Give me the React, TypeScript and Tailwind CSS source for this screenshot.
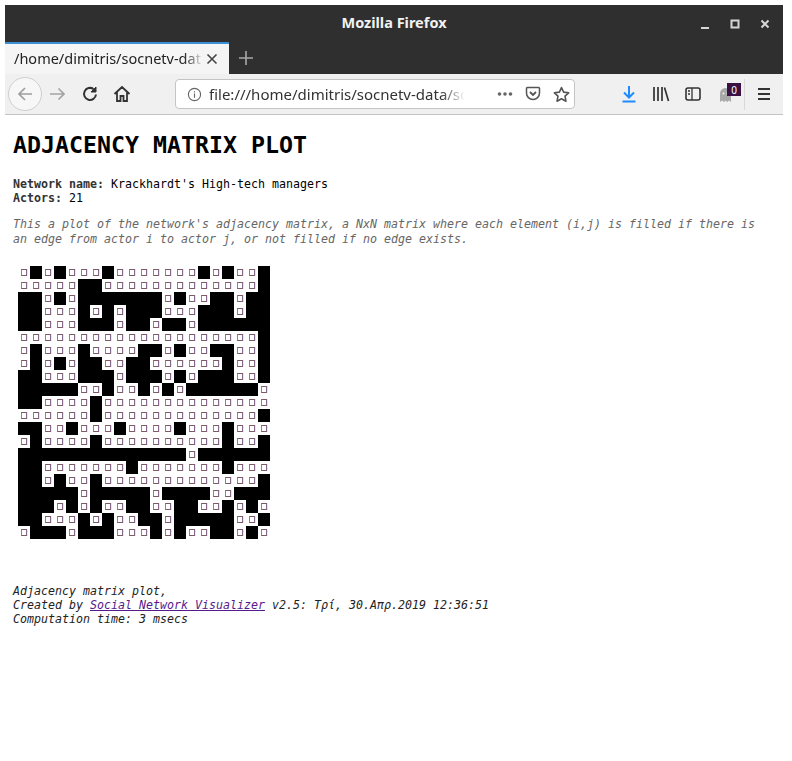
const M = [
  "010100010000000101001",
  "000001100000000000001",
  "110101111111010011011",
  "110001010111000111011",
  "110001110110110111111",
  "000000000000000000001",
  "010001000011010011001",
  "010101100110000001001",
  "110001110111010111001",
  "111110010010101111110",
  "110000100000000000000",
  "000000100000000000001",
  "110010001000010001000",
  "010000100000000001001",
  "111111111111110111111",
  "110000000100000001000",
  "110100100000000000001",
  "111110111110111100111",
  "111010100110011001010",
  "110001010011011111001",
  "011101110001010011010",
];

const mono = { fontFamily: '"DejaVu Sans Mono", monospace' };

function Win() {
  return (
    <div className="flex items-center gap-[18px] pr-[12px]">
      <svg width="12" height="12" viewBox="0 0 12 12"><rect x="2" y="9" width="8" height="2" fill="#d6d6d6" /></svg>
      <svg width="12" height="12" viewBox="0 0 12 12"><rect x="2.500" y="2.500" width="7" height="7" fill="none" stroke="#d6d6d6" strokeWidth="2" /></svg>
      <svg width="12" height="12" viewBox="0 0 12 12"><path d="M2.500 2.500l7 7M9.500 2.500l-7 7" stroke="#d6d6d6" strokeWidth="2" /></svg>
    </div>
  );
}

export default function App() {
  return (
    <div className="min-h-[761px] bg-white pt-[5px]" style={mono}>
      <div className="mx-[5px] mr-[9px]" style={{ fontFamily: '"Noto Sans", sans-serif' }}>
        <div className="relative flex h-[37px] items-center justify-end bg-[#2f2f2f]">
          <span className="absolute left-0 right-0 top-[7px] text-center text-[14.5px] font-bold leading-[20px] text-[#f2f2f2]">Mozilla Firefox</span>
          <Win />
        </div>
        <div className="flex h-[32px] items-stretch bg-[#2f2f2f]">
          <div className="flex w-[224px] items-center border-t-2 border-[#3d8fd6] bg-[#f5f5f5] pl-[9px]">
            <span className="w-[190px] whitespace-nowrap text-[14.5px] text-[#222]" style={{ maskImage: "linear-gradient(to right, #000 170px, transparent 190px)" }}>/home/dimitris/socnetv-dat</span>
            <svg className="ml-[2px] shrink-0" width="12" height="12" viewBox="0 0 12 12"><path d="M1.500 1.500l9 9M10.500 1.500l-9 9" stroke="#444" strokeWidth="1.600" /></svg>
          </div>
          <div className="flex w-[34px] items-center justify-center">
            <svg width="16" height="16" viewBox="0 0 16 16"><path d="M8 1v14M1 8h14" stroke="#a8a8a8" strokeWidth="1.600" /></svg>
          </div>
        </div>
        <div className="flex h-[41px] items-center border-b border-[#c4c4c4] bg-[#f0f0f0]">
          <div className="ml-[3px] flex h-[34px] w-[34px] items-center justify-center rounded-full border border-[#cfcfcf] bg-[#f7f7f7]">
            <svg width="18" height="18" viewBox="0 0 18 18" fill="none" stroke="#9e9e9e" strokeWidth="1.700"><path d="M16 9H3M9 3L3 9l6 6" /></svg>
          </div>
          <svg className="ml-[7px]" width="18" height="18" viewBox="0 0 18 18" fill="none" stroke="#a3a3a3" strokeWidth="1.700"><path d="M1 9h14M9.500 3.500L15 9l-5.500 5.500" /></svg>
          <svg className="ml-[14px]" width="18" height="18" viewBox="0 0 18 18" fill="none" stroke="#333" strokeWidth="2"><path d="M15 9.500A6 6 0 1 1 12.500 4" /><path d="M15 2v5h-5z" fill="#333" strokeWidth="1" /></svg>
          <svg className="ml-[14px]" width="18" height="18" viewBox="0 0 18 18" fill="none" stroke="#333" strokeWidth="1.800"><path d="M1.500 9L9 2l7.500 7M4 7.500V16h3.500v-5h3v5H14V7.500" /></svg>
          <div className="ml-[44px] flex h-[30px] w-[400px] shrink-0 items-center rounded-[4px] border border-[#c4c4c4] bg-white">
            <svg className="ml-[11px] shrink-0" width="15" height="15" viewBox="0 0 16 16" fill="none" stroke="#666" strokeWidth="1.200"><circle cx="8" cy="8" r="6.500" /><path d="M8 7v4.500M8 4.500v1.300" /></svg>
            <span className="ml-[7px] w-[256px] whitespace-nowrap text-[15px] text-[#333]" style={{ maskImage: "linear-gradient(to right, #000 232px, transparent 256px)" }}>file:///home/dimitris/socnetv-data/sc</span>
            <svg className="ml-[32px] shrink-0" width="16" height="16" viewBox="0 0 16 16" fill="#666"><circle cx="2.500" cy="8" r="1.800" /><circle cx="8" cy="8" r="1.800" /><circle cx="13.500" cy="8" r="1.800" /></svg>
            <svg className="ml-[12px] shrink-0" width="16" height="16" viewBox="0 0 16 16" fill="none" stroke="#555" strokeWidth="1.500"><path d="M2.500 1.500h11a1 1 0 0 1 1 1V7a6.500 6.500 0 0 1-13 0V2.500a1 1 0 0 1 1-1z" /><path d="M5 6l3 3 3-3" strokeWidth="1.800" /></svg>
            <svg className="ml-[12px] shrink-0" width="17" height="17" viewBox="0 0 16 16" fill="none" stroke="#555" strokeWidth="1.500"><path d="M8 1.500l2 4.300 4.700.6-3.400 3.200.9 4.700L8 12l-4.200 2.300.9-4.700L1.300 6.400 6 5.800z" strokeLinejoin="round" /></svg>
          </div>
          <svg className="ml-[46px] shrink-0" width="16" height="18" viewBox="0 0 16 18" fill="none" stroke="#1e8cff" strokeWidth="2"><path d="M8 1v11M3 7.500L8 12.500l5-5M1.500 16.500h13" /></svg>
          <svg className="ml-[15px] shrink-0" width="18" height="16" viewBox="0 0 18 16" fill="none" stroke="#333" strokeWidth="1.700"><path d="M2 1v14M6 1v14M10 1v14M12.500 1.500l4 13.500" /></svg>
          <svg className="ml-[15px] shrink-0" width="16" height="16" viewBox="0 0 16 16" fill="none" stroke="#333" strokeWidth="1.600"><rect x="1" y="2" width="14" height="12" rx="2" /><path d="M7 2v12M3 5h2M3 8h2" strokeWidth="1.300" /></svg>
          <div className="relative ml-[17px] h-[20px] w-[22px] shrink-0">
            <svg className="absolute bottom-[1px] left-0" width="15" height="16" viewBox="0 0 15 16" fill="#a8a8a8"><path d="M7.500 1A5.500 5.500 0 0 0 2 6.500V15l2-1.500L6 15l1.500-1.500L9 15l2-1.500 2 1.500V6.500A5.500 5.500 0 0 0 7.500 1z" /><circle cx="5.500" cy="6.500" r="1" fill="#f0f0f0" /><circle cx="9.500" cy="6.500" r="1" fill="#f0f0f0" /></svg>
            <span className="absolute right-[-1px] top-[-1px] flex h-[13px] w-[14px] items-center justify-center bg-[#3b1042] text-[10px] leading-none text-white">0</span>
          </div>
          <div className="ml-[4px] h-[31px] w-px shrink-0 bg-[#d8d8d8]" />
          <svg className="ml-[12px] shrink-0" width="14" height="14" viewBox="0 0 14 14" stroke="#333" strokeWidth="1.800"><path d="M1 2h12M1 7h12M1 12h12" /></svg>
        </div>
      </div>

      <div className="pl-[13px] pt-[16px] text-black">
        <h1 className="text-[23.25px] font-bold leading-[28px]">ADJACENCY MATRIX PLOT</h1>
        <p className="mt-[18px] text-[11.63px] leading-[14px]"><b className="text-[#333]">Network name:</b> Krackhardt's High-tech managers</p>
        <p className="text-[11.63px] leading-[14px]"><b className="text-[#333]">Actors:</b> 21</p>
        <p className="mt-[12px] w-[760px] text-[11.63px] italic leading-[15px] text-[#666]">This a plot of the network's adjacency matrix, a NxN matrix where each element (i,j) is filled if there is an edge from actor i to actor j, or not filled if no edge exists.</p>
        <div className="ml-[5px] mt-[19px] grid w-[252px] grid-cols-[repeat(21,12px)] auto-rows-[13px]">
          {M.flatMap((row, r) =>
            row.split("").map((v, c) =>
              v === "1" ? (
                <div key={`${r}-${c}`} className="bg-black" />
              ) : (
                <div key={`${r}-${c}`} className="flex items-center justify-center">
                  <div className="h-[7px] w-[6px] border border-t-[#7b5a60] border-b-[#7b5a60] border-l-[#a8805a] border-r-[#86688c] shadow-[1px_0_0_#d4f0f5]" />
                </div>
              ),
            ),
          )}
        </div>
        <div className="mt-[45px] text-[11.63px] italic leading-[14px] text-[#222]">
          <div>Adjacency matrix plot,</div>
          <div>Created by <a className="text-[#551a8b] underline" href="#x">Social Network Visualizer</a> v2.5: Τρί, 30.Απρ.2019 12:36:51</div>
          <div>Computation time: 3 msecs</div>
        </div>
      </div>
    </div>
  );
}
